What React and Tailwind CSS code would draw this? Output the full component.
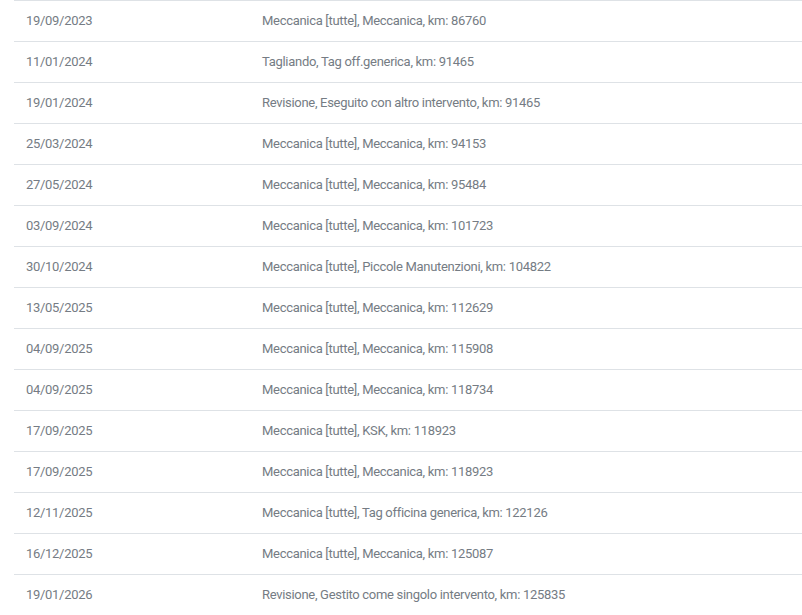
const rows = [
  ['19/09/2023', 'Meccanica [tutte], Meccanica, km: 86760'],
  ['11/01/2024', 'Tagliando, Tag off.generica, km: 91465'],
  ['19/01/2024', 'Revisione, Eseguito con altro intervento, km: 91465'],
  ['25/03/2024', 'Meccanica [tutte], Meccanica, km: 94153'],
  ['27/05/2024', 'Meccanica [tutte], Meccanica, km: 95484'],
  ['03/09/2024', 'Meccanica [tutte], Meccanica, km: 101723'],
  ['30/10/2024', 'Meccanica [tutte], Piccole Manutenzioni, km: 104822'],
  ['13/05/2025', 'Meccanica [tutte], Meccanica, km: 112629'],
  ['04/09/2025', 'Meccanica [tutte], Meccanica, km: 115908'],
  ['04/09/2025', 'Meccanica [tutte], Meccanica, km: 118734'],
  ['17/09/2025', 'Meccanica [tutte], KSK, km: 118923'],
  ['17/09/2025', 'Meccanica [tutte], Meccanica, km: 118923'],
  ['12/11/2025', 'Meccanica [tutte], Tag officina generica, km: 122126'],
  ['16/12/2025', 'Meccanica [tutte], Meccanica, km: 125087'],
  ['19/01/2026', 'Revisione, Gestito come singolo intervento, km: 125835'],
];

export default function App() {
  return (
    <div className="h-[615px] overflow-hidden bg-white pl-[14px]">
      <div className="flex flex-col text-[13px] tracking-[-0.3px] text-[#757c84] font-['Roboto',sans-serif]">
        {rows.map(([date, desc], i) => (
          <div key={i} className="flex h-[41px] shrink-0 items-center border-t border-[#dee2e6]">
            <div className="w-[236px] shrink-0 px-3">{date}</div>
            <div className="flex-1 px-3">{desc}</div>
          </div>
        ))}
      </div>
    </div>
  );
}
